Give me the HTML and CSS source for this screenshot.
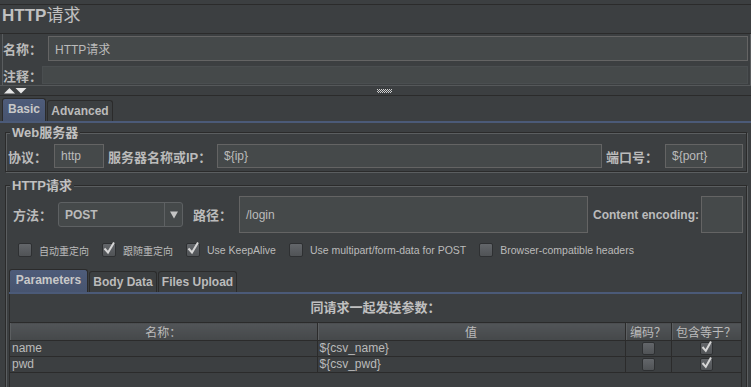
FILE: index.html
```html
<!DOCTYPE html>
<html>
<head>
<meta charset="utf-8">
<link rel="stylesheet" href="styles.css">
</head>
<body>
<div class="title">HTTP<span class="cn">请求</span></div>

<div class="namepanel">
  <div class="nrow"><span class="lbl l-name">名称：</span><div class="input in-name">HTTP请求</div></div>
  <div class="nrow2"><span class="lbl l-comm">注释：</span><div class="input in-comm"></div></div>
</div>

<div class="divider">
  <svg class="arrows" width="24" height="6" viewBox="0 0 24 6"><polygon points="0,5.5 5.5,0 11,5.5" fill="#e6e6e6"/><polygon points="11.5,0 22.5,0 17,5.5" fill="#e6e6e6"/></svg>
  <svg class="dots" width="15" height="4" viewBox="0 0 15 4"><defs><pattern id="chk" width="2" height="2" patternUnits="userSpaceOnUse"><rect x="0" y="0" width="1" height="1" fill="#d0d0d0"/><rect x="1" y="1" width="1" height="1" fill="#d0d0d0"/></pattern></defs><rect width="15" height="4" fill="url(#chk)"/></svg>
</div>

<div class="tabs toptabs">
  <div class="tab sel t-basic">Basic</div>
  <div class="tab t-adv">Advanced</div>
</div>

<fieldset class="group web">
  <legend>Web服务器</legend>
  <div class="row">
    <span class="lbl l-proto">协议：</span>
    <div class="input in-http">http</div>
    <span class="lbl l-host">服务器名称或IP：</span>
    <div class="input in-ip">${ip}</div>
    <span class="lbl l-port">端口号：</span>
    <div class="input in-port">${port}</div>
  </div>
</fieldset>

<fieldset class="group http">
  <legend>HTTP请求</legend>
  <div class="mrow">
    <span class="lbl l-method">方法：</span>
    <div class="select"><span class="sval">POST</span><span class="sarrow"><svg width="8" height="8" viewBox="0 0 8 8"><polygon points="0,0.5 8,0.5 4,7.5" fill="#c4c4c4"/></svg></span></div>
    <span class="lbl l-path">路径：</span>
    <div class="input in-path">/login</div>
    <span class="lbl l-ce">Content encoding:</span>
    <div class="input in-ce"></div>
  </div>

  <div class="cbrow">
    <div class="cbi"><span class="cb"></span><span class="cbt cn-small">自动重定向</span></div>
    <div class="cbi"><span class="cb"><svg class="ck" width="14" height="14" viewBox="0 0 14 14"><path d="M2.5 6.5 L6 10.5 L12 0.5" fill="none" stroke="#d6d6d6" stroke-width="2"/></svg></span><span class="cbt cn-small">跟随重定向</span></div>
    <div class="cbi"><span class="cb"><svg class="ck" width="14" height="14" viewBox="0 0 14 14"><path d="M2.5 6.5 L6 10.5 L12 0.5" fill="none" stroke="#d6d6d6" stroke-width="2"/></svg></span><span class="cbt">Use KeepAlive</span></div>
    <div class="cbi"><span class="cb"></span><span class="cbt">Use multipart/form-data for POST</span></div>
    <div class="cbi"><span class="cb"></span><span class="cbt">Browser-compatible headers</span></div>
  </div>

  <div class="tabs ptabs">
    <div class="tab sel t-par">Parameters</div>
    <div class="tab t-body">Body Data</div>
    <div class="tab t-files">Files Upload</div>
  </div>

  <div class="ppanel">
    <div class="ptitle">同请求一起发送参数：</div>
    <table class="ptable">
      <colgroup><col class="c1"><col class="c2"><col class="c3"><col class="c4"></colgroup>
      <thead>
        <tr><th>名称：</th><th>值</th><th>编码？</th><th>包含等于？</th></tr>
      </thead>
      <tbody>
        <tr><td>name</td><td>${csv_name}</td><td class="cc"><span class="tcb"></span></td><td class="cc"><span class="tcb"><svg class="ck" width="13" height="13" viewBox="0 0 13 13"><path d="M2.5 6 L5.8 9.8 L11 0.5" fill="none" stroke="#d6d6d6" stroke-width="2"/></svg></span></td></tr>
        <tr><td>pwd</td><td>${csv_pwd}</td><td class="cc"><span class="tcb"></span></td><td class="cc"><span class="tcb"><svg class="ck" width="13" height="13" viewBox="0 0 13 13"><path d="M2.5 6 L5.8 9.8 L11 0.5" fill="none" stroke="#d6d6d6" stroke-width="2"/></svg></span></td></tr>
      </tbody>
    </table>
  </div>
</fieldset>
</body>
</html>
```

FILE: styles.css
```css
* { box-sizing: border-box; }
html, body { margin: 0; padding: 0; }
body {
  width: 751px;
  height: 387px;
  overflow: hidden;
  background: #3c3f41;
  color: #bbbbbb;
  font-family: "Liberation Sans", "Noto Sans CJK SC", sans-serif;
  font-size: 12px;
}

.title {
  margin-top: 4px;
  height: 30px;
  border-top: 1px solid #2b2b2b;
  border-bottom: 1px solid #2b2b2b;
  padding-left: 2px;
  font-size: 17px;
  font-weight: bold;
  line-height: 22px;
  color: #c0c0c0;
}
.title .cn { font-weight: normal; }

.lbl {
  font-weight: bold;
  font-size: 13px;
  white-space: nowrap;
  flex: none;
}

.input {
  background: #45494a;
  border: 1px solid #646464;
  color: #bbbbbb;
  padding-left: 6px;
  display: flex;
  align-items: center;
  white-space: nowrap;
  overflow: hidden;
}

.namepanel {
  margin-left: 2px;
  height: 51px;
  border-left: 1px solid #5a5d5f;
  border-right: 1px solid #5a5d5f;
  padding-top: 2px;
}
.nrow { display: flex; align-items: center; height: 25px; }
.nrow2 { display: flex; align-items: center; height: 18px; margin-top: 5px; }
.l-name { width: 45px; }
.l-comm { width: 39px; }
.in-name { flex: 1; height: 25px; margin-right: 2px; }
.in-comm { flex: 1; height: 18px; margin-right: 2px; border-color: #4a4e50; }

.divider {
  height: 11px;
  border-top: 1px solid #55585a;
  border-bottom: 1px solid #2b2b2b;
  display: flex;
  align-items: center;
}
.arrows { margin-left: 4px; display: block; }
.dots { margin-left: 349px; display: block; }

.tabs {
  display: flex;
  align-items: flex-end;
  border-bottom: 2px solid #4b5a78;
}
.tab {
  height: 21px;
  border: 1px solid #2b2b2b;
  border-bottom: none;
  border-radius: 3px 3px 0 0;
  font-weight: bold;
  font-size: 12px;
  display: flex;
  align-items: center;
  justify-content: center;
  margin-right: 1px;
  color: #bbbbbb;
}
.tab.sel {
  height: 23px;
  background: linear-gradient(#4e5c7a, #47546f);
  padding-bottom: 2px;
  color: #c8c8c8;
}
.toptabs { height: 27px; padding-left: 2px; }
.t-basic { width: 44px; }
.t-adv { width: 66px; }

.group {
  border: 1px solid #2b2b2b;
  box-shadow: inset 1px 1px 0 #5b5e60, 1px 1px 0 #5b5e60;
  min-width: 0;
}
.group legend {
  font-size: 13px;
  font-weight: bold;
  line-height: 15px;
  padding: 0 2px;
  margin-left: 3px;
  background: #3c3f41;
  color: #c0c0c0;
}

.web { margin: 2px 4px 0 5px; padding: 4px 3px 3px 1px; }
.row { display: flex; align-items: center; height: 24px; }
.l-proto { width: 46px; margin-left: 1px; }
.in-http { width: 50px; height: 24px; }
.l-host { width: 109px; margin-left: 4px; }
.in-ip { flex: 1; height: 24px; }
.l-port { width: 59px; margin-left: 4px; }
.in-port { width: 78px; height: 24px; }

.http { margin: 6px 4px 0 5px; padding: 0 3px 0 1px; height: 260px; }
.mrow { display: flex; align-items: center; height: 37px; margin-top: 3px; padding-left: 6px; }
.l-method { width: 45px; }
.select {
  width: 125px;
  height: 25px;
  display: flex;
  border: 1px solid #5e6163;
  border-radius: 3px;
  background: #45494a;
}
.sval { flex: 1; padding-left: 6px; font-weight: bold; display: flex; align-items: center; }
.sarrow { width: 18px; border-left: 1px solid #5e6163; display: flex; align-items: center; justify-content: center; }
.sarrow svg { display: block; }
.l-path { width: 46px; margin-left: 10px; }
.in-path { flex: 1; height: 37px; }
.l-ce { width: 108px; margin-left: 5px; font-size: 12px; }
.in-ce { width: 42px; height: 37px; }

.cbrow { display: flex; align-items: center; height: 14px; margin-top: 10px; padding-left: 11px; }
.cbi { display: flex; align-items: center; margin-right: 13px; }
.cb {
  width: 14px;
  height: 14px;
  flex: none;
  border: 1px solid #2e3032;
  border-radius: 2px;
  background: linear-gradient(#63666a, #505356);
  margin-right: 7px;
  position: relative;
}
.cb .ck { position: absolute; left: -1px; top: -2px; }
.cbt { font-size: 10.5px; white-space: nowrap; }
.cn-small { font-size: 10px; letter-spacing: 0; }

.ptabs { height: 25px; margin: 12px 1px 0 2px; }
.t-par { width: 79px; }
.t-body { width: 68px; }
.t-files { width: 79px; }

.ppanel {
  margin: 0 1px 0 2px;
  height: 140px;
  border-left: 1px solid #2b2b2b;
  border-right: 1px solid #2b2b2b;
}
.ptitle {
  height: 28px;
  line-height: 28px;
  text-align: center;
  font-weight: bold;
  font-size: 13px;
  color: #c0c0c0;
}
.ptable {
  width: 731px;
  border-collapse: collapse;
  border-spacing: 0;
  table-layout: fixed;
}
.c1 { width: 307px; }
.c2 { width: 308px; }
.c3 { width: 46px; }
.c4 { width: 70px; }
.ptable th {
  height: 18px;
  padding: 0;
  font-weight: normal;
  font-size: 12px;
  background: linear-gradient(#525558, #45484a);
  border-right: 1px solid #2b2b2b;
  border-bottom: 1px solid #2b2b2b;
  border-top: 1px solid #2b2b2b;
  box-shadow: inset 1px 0 0 #5c5f61;
  color: #bbbbbb;
  text-align: center;
}
.ptable td {
  height: 16px;
  padding: 0 0 0 2px;
  border-right: 1px solid #2b2b2b;
  border-bottom: 1px solid #2b2b2b;
  font-size: 12px;
  line-height: 15px;
  white-space: nowrap;
  overflow: hidden;
}
.ptable td.cc { padding: 0; text-align: center; }
.tcb {
  display: inline-block;
  vertical-align: middle;
  width: 13px;
  height: 13px;
  border: 1px solid #2e3032;
  border-radius: 2px;
  background: linear-gradient(#63666a, #505356);
  position: relative;
}
.tcb .ck { position: absolute; left: -1px; top: -2px; }
```
